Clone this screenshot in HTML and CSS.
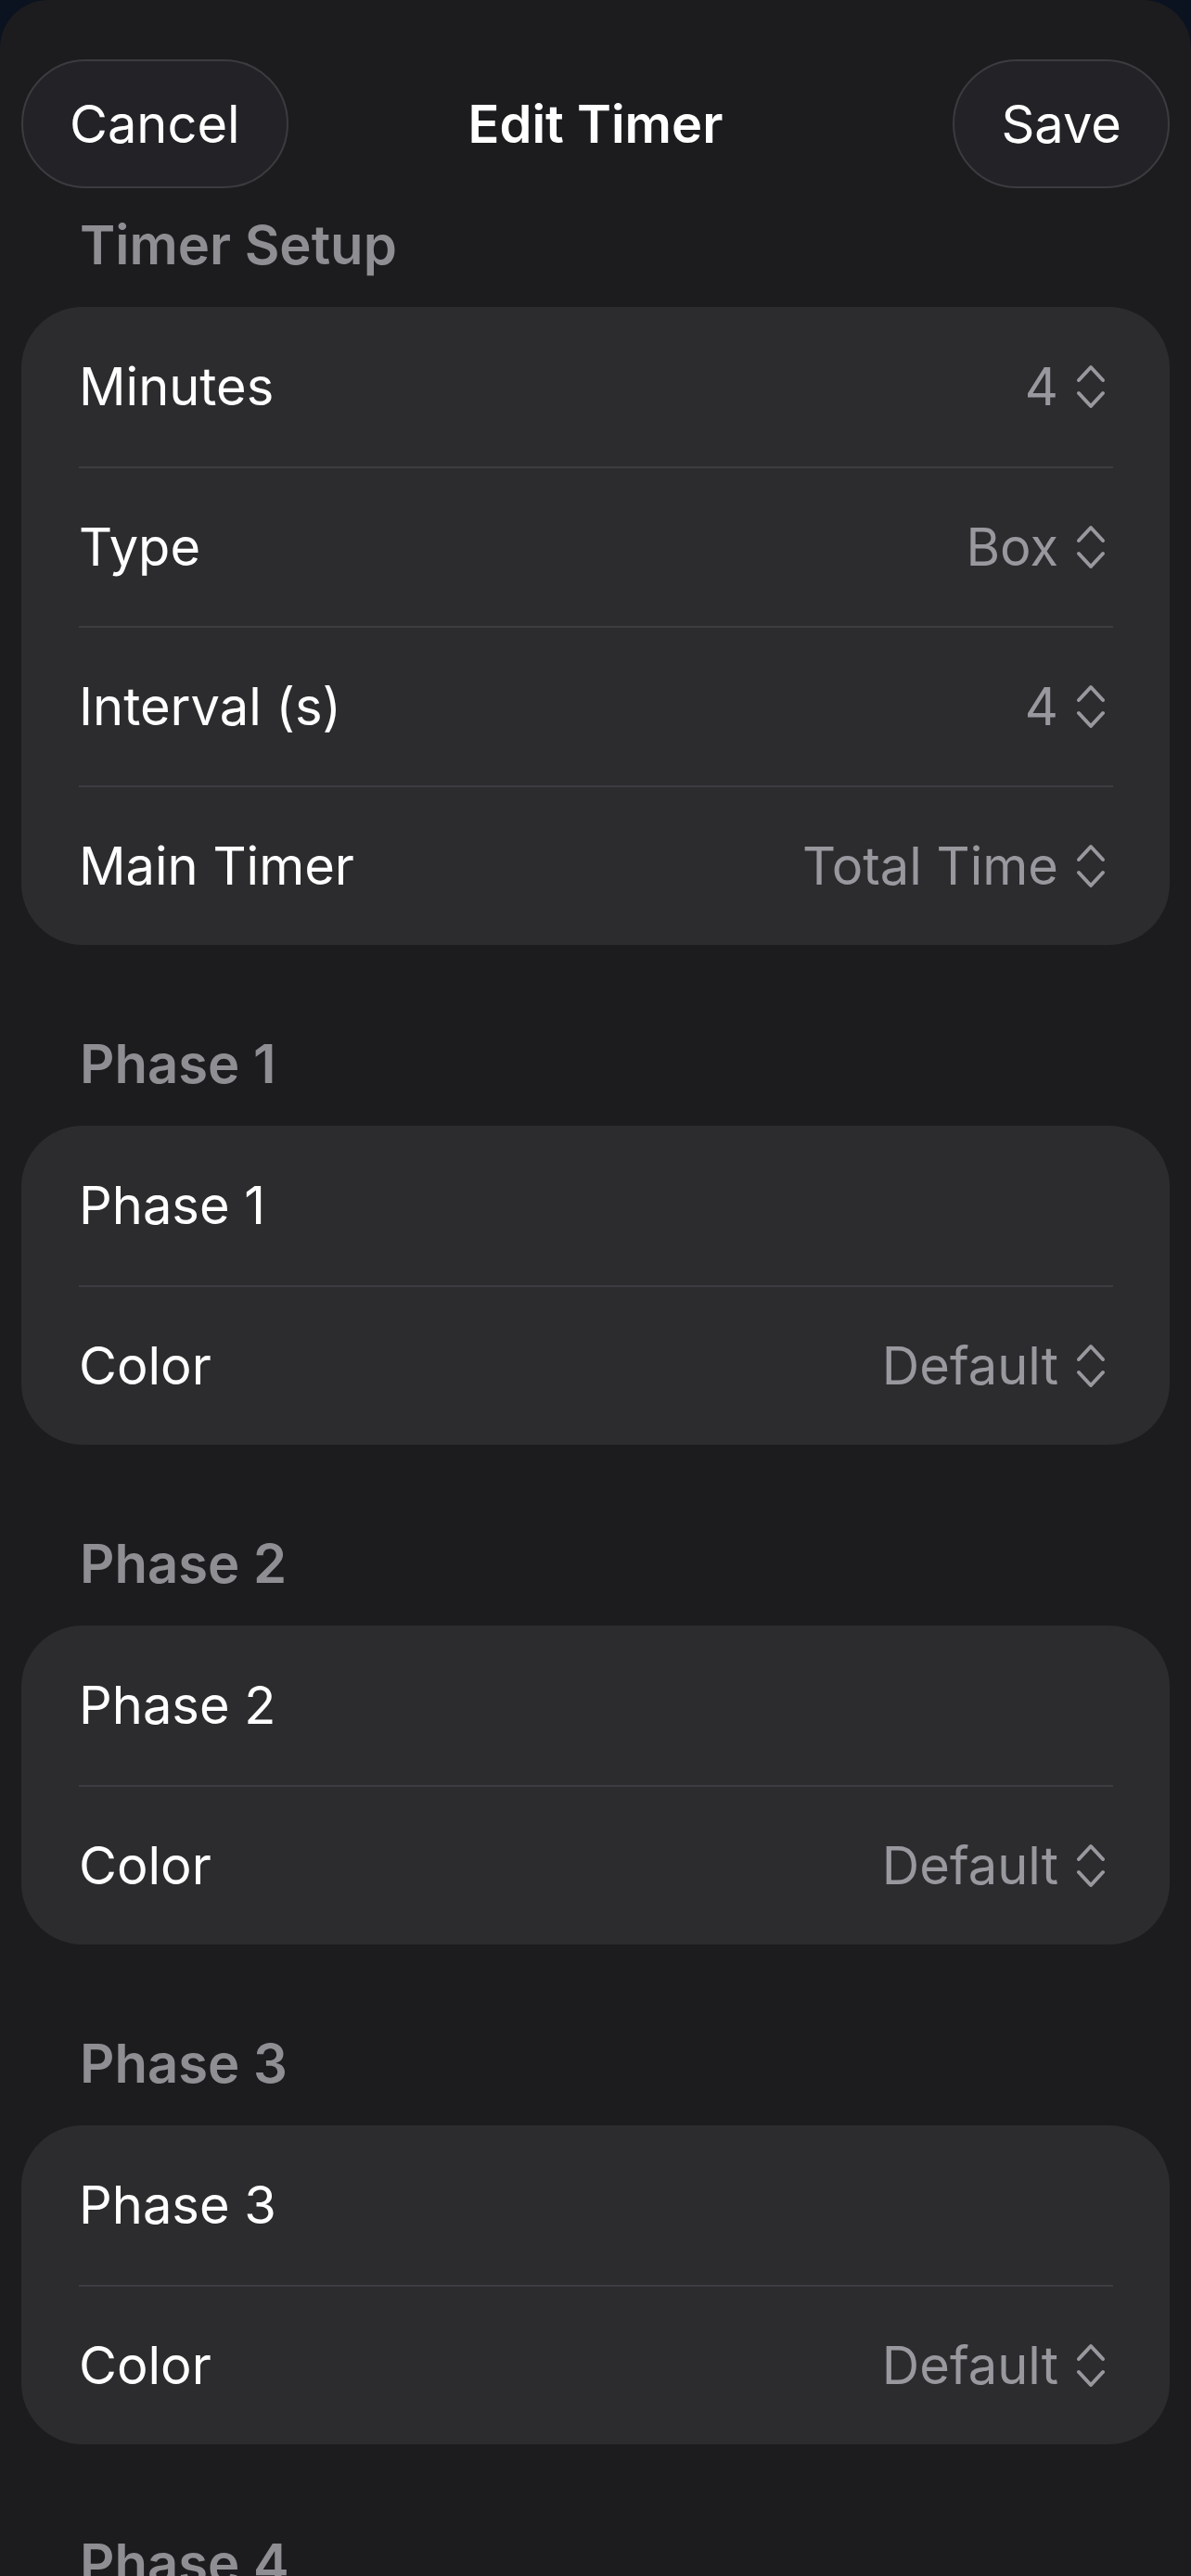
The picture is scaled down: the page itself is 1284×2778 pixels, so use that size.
FILE: index.html
```html
<!DOCTYPE html>
<html lang="en">
<head>
    <meta charset="UTF-8">
    <meta name="viewport" content="width=device-width, initial-scale=1.0">
    <title>Edit Timer</title>
    <link rel="stylesheet" href="styles.css">
</head>
<body>
    <div class="sheet">
        <!-- Navigation bar -->
        <div class="nav-bar">
            <button class="nav-btn cancel-btn">Cancel</button>
            <h1 class="nav-title">Edit Timer</h1>
            <button class="nav-btn save-btn">Save</button>
        </div>

        <div class="form">
            <div class="section">
                <h2 class="section-header">Timer Setup</h2>
                <div class="card">
                    <div class="row">
                        <span class="row-label">Minutes</span>
                        <span class="row-value">4
                            <svg class="chevrons" viewBox="0 0 34 50"><path d="M4 18 L17 4 L30 18 M4 32 L17 46 L30 32"/></svg>
                        </span>
                    </div>
                    <div class="row">
                        <span class="row-label">Type</span>
                        <span class="row-value">Box
                            <svg class="chevrons" viewBox="0 0 34 50"><path d="M4 18 L17 4 L30 18 M4 32 L17 46 L30 32"/></svg>
                        </span>
                    </div>
                    <div class="row">
                        <span class="row-label">Interval (s)</span>
                        <span class="row-value">4
                            <svg class="chevrons" viewBox="0 0 34 50"><path d="M4 18 L17 4 L30 18 M4 32 L17 46 L30 32"/></svg>
                        </span>
                    </div>
                    <div class="row">
                        <span class="row-label">Main Timer</span>
                        <span class="row-value">Total Time
                            <svg class="chevrons" viewBox="0 0 34 50"><path d="M4 18 L17 4 L30 18 M4 32 L17 46 L30 32"/></svg>
                        </span>
                    </div>
                </div>
            </div>

            <div class="section">
                <h2 class="section-header">Phase 1</h2>
                <div class="card">
                    <div class="row">
                        <span class="row-label">Phase 1</span>
                    </div>
                    <div class="row">
                        <span class="row-label">Color</span>
                        <span class="row-value">Default
                            <svg class="chevrons" viewBox="0 0 34 50"><path d="M4 18 L17 4 L30 18 M4 32 L17 46 L30 32"/></svg>
                        </span>
                    </div>
                </div>
            </div>

            <div class="section">
                <h2 class="section-header">Phase 2</h2>
                <div class="card">
                    <div class="row">
                        <span class="row-label">Phase 2</span>
                    </div>
                    <div class="row">
                        <span class="row-label">Color</span>
                        <span class="row-value">Default
                            <svg class="chevrons" viewBox="0 0 34 50"><path d="M4 18 L17 4 L30 18 M4 32 L17 46 L30 32"/></svg>
                        </span>
                    </div>
                </div>
            </div>

            <div class="section">
                <h2 class="section-header">Phase 3</h2>
                <div class="card">
                    <div class="row">
                        <span class="row-label">Phase 3</span>
                    </div>
                    <div class="row">
                        <span class="row-label">Color</span>
                        <span class="row-value">Default
                            <svg class="chevrons" viewBox="0 0 34 50"><path d="M4 18 L17 4 L30 18 M4 32 L17 46 L30 32"/></svg>
                        </span>
                    </div>
                </div>
            </div>

            <!-- Next section starts just below the fold -->
            <div class="section">
                <h2 class="section-header">Phase 4</h2>
            </div>
        </div>
    </div>
</body>
</html>
```

FILE: styles.css
```css
/* Reset and base font */
* {
    box-sizing: border-box;
    margin: 0;
    padding: 0;
}
body {
    background-color: #0b1220;
    font-family: Inter, "Noto Sans", sans-serif;
    color: #fff;
    height: 2778px;
    overflow: hidden;
}
/* Sheet with rounded top corners */
.sheet {
    background-color: #1c1c1e;
    border-radius: 52px 52px 0 0;
    min-height: 100%;
    padding: 64px 23px 0;
}
/* Navigation bar */
.nav-bar {
    display: grid;
    grid-template-columns: 1fr auto 1fr;
    align-items: center;
    margin-bottom: 26px;
}
.nav-btn {
    height: 139px;
    padding: 0 50px;
    border-radius: 70px;
    background-color: #232327;
    border: 2px solid #3b3b40;
    color: #fff;
    font-family: Inter, "Noto Sans", sans-serif;
    font-size: 56px;
    font-weight: 400;
}
.cancel-btn {
    justify-self: start;
}
.save-btn {
    justify-self: end;
}
.nav-title {
    font-size: 56px;
    font-weight: 600;
    color: #fff;
}
/* Sections */
.section + .section {
    margin-top: 93px;
}
.section-header {
    font-size: 58px;
    font-weight: 600;
    line-height: 70px;
    color: #8e8e93;
    padding: 0 0 32px 63px;
}
.card {
    background-color: #2c2c2e;
    border-radius: 66px;
}
/* Rows: separator is inset on both sides */
.row {
    height: 172px;
    margin: 0 61px 0 62px;
    padding-right: 7px;
    display: flex;
    align-items: center;
    justify-content: space-between;
    font-size: 56px;
}
.row + .row {
    border-top: 2px solid #3d3d41;
}
.row-value {
    display: flex;
    align-items: center;
    gap: 18px;
    color: #98989e;
}
.chevrons {
    width: 34px;
    height: 50px;
    fill: none;
    stroke: #98989e;
    stroke-width: 4;
    stroke-linecap: round;
    stroke-linejoin: round;
}
```
